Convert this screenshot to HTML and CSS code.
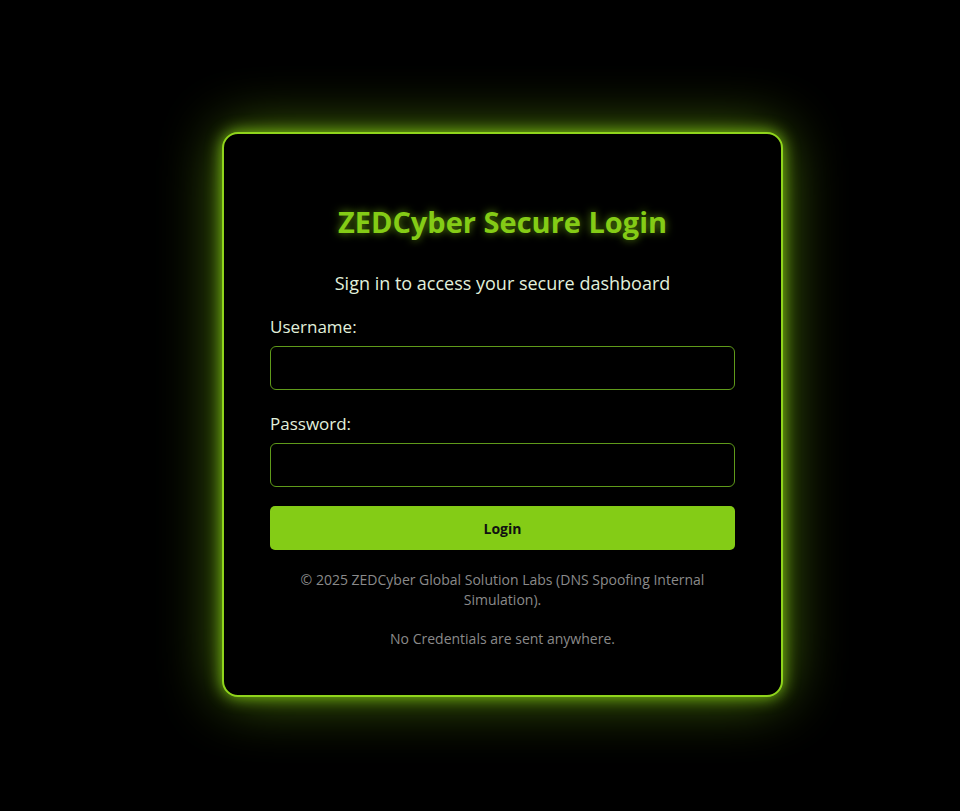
FILE: index.html
```html
<!DOCTYPE html>
<html lang="en">
<head>
  <meta charset="UTF-8">
  <meta name="viewport" content="width=device-width, initial-scale=1.0">
  <title>ZEDCyber Secure Login</title>
  <link rel="stylesheet" href="styles.css">
</head>
<body>
  <div class="login-card">
    <h2>ZEDCyber Secure Login</h2>
    <p class="subtitle">Sign in to access your secure dashboard</p>
    <form id="login-form">
      <label for="username">Username:</label>
      <input type="text" id="username" required>
      <label for="password">Password:</label>
      <input type="password" id="password" required>
      <button type="submit">Login</button>
    </form>
    <p class="footer">&copy; 2025 ZEDCyber Global Solution Labs (DNS Spoofing Internal Simulation).</p>
    <p class="note">No Credentials are sent anywhere.</p>
  </div>
</body>
</html>
```

FILE: styles.css
```css
* {
  box-sizing: border-box;
}
body {
  font-family: "Open Sans", "Noto Sans", sans-serif;
  background-color: #000;
  margin: 0;
  min-height: 100vh;
  display: flex;
  align-items: center;
  justify-content: center;
  padding: 18px 0 0 45px;
}
.login-card {
  width: 561px;
  background: #000;
  border: 2px solid #8fd41c;
  border-radius: 16px;
  padding: 46px 46px 46px;
  box-shadow: 0 0 16px rgba(132, 204, 22, 0.95), 0 0 60px rgba(132, 204, 22, 0.6);
  text-align: center;
}
.login-card h2 {
  margin: 23px 0 0;
  font-size: 29px;
  line-height: 37px;
  font-weight: 700;
  color: #84cc16;
  text-shadow: 0 0 8px rgba(132, 204, 22, 0.7);
}
.subtitle {
  margin: 31px 0 0;
  font-size: 18px;
  line-height: 24px;
  color: #e2f0dc;
}
form {
  text-align: left;
}
label {
  display: block;
  margin: 21px 0 8px;
  font-size: 17px;
  line-height: 22px;
  color: #e2f0dc;
}
label[for="password"] {
  margin-top: 23px;
}
input {
  display: block;
  width: 100%;
  height: 44px;
  padding: 10px;
  background: #000;
  border: 1px solid #5f9a1a;
  border-radius: 6px;
  color: #e2f0dc;
  font-size: 16px;
}
button {
  display: block;
  width: 100%;
  height: 44px;
  margin-top: 19px;
  background-color: #84cc16;
  color: #111;
  font-family: inherit;
  font-size: 14px;
  font-weight: 700;
  border: none;
  border-radius: 5px;
  cursor: pointer;
}
.footer {
  margin: 20px 0 0;
  padding: 0 12px;
  font-size: 14px;
  line-height: 20px;
  color: #8a8a8a;
}
.note {
  margin: 19px 0 0;
  font-size: 14px;
  line-height: 20px;
  color: #8a8a8a;
}
```
